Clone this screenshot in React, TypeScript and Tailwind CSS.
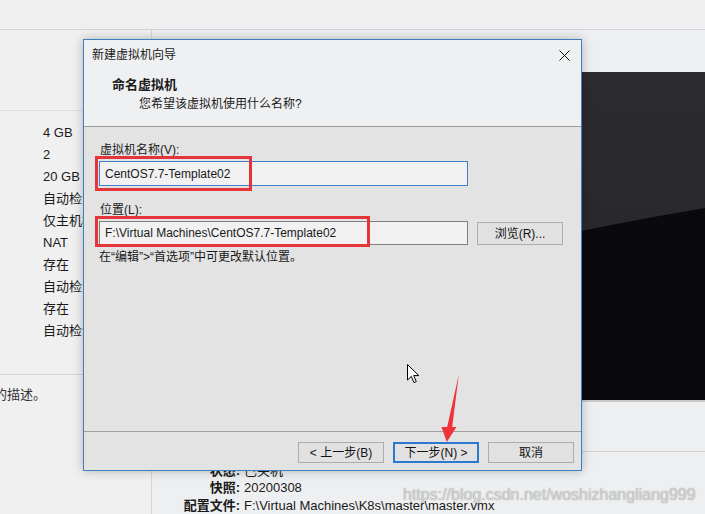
import React from "react";

const FONT = "font-['Liberation_Sans','Noto_Sans_CJK_SC',sans-serif]";

function Btn({ children, primary, className = "" }: { children: React.ReactNode; primary?: boolean; className?: string }) {
  return (
    <div
      className={
        "flex items-center justify-center bg-[#e1e1e1] text-[12px] leading-none text-[#111] " +
        (primary ? "border-2 border-[#2a78d0] " : "border border-[#adadad] ") +
        className
      }
    >
      {children}
    </div>
  );
}

export default function App() {
  const list = ["4 GB", "2", "20 GB", "自动检测", "仅主机模式", "NAT", "存在", "自动检测", "存在", "自动检测"];
  return (
    <div className={"relative w-[705px] h-[514px] overflow-hidden bg-[#f0f0f0] text-[#1a1a1a] " + FONT}>
      {/* top bar */}
      <div className="h-[30px] border-b border-[#cdd6de] bg-[#efeff0]" />
      <div className="flex h-[484px]">
        {/* left column */}
        <div className="w-[152px] shrink-0 border-r border-[#d6d6d6] bg-[#f0f0f0]">
          <div className="h-[81px] border-b border-[#d8dde2]" />
          <div className="pt-[11px] pl-[43px] h-[264px] border-b border-[#d3d3d3]">
            {list.map((t, i) => (
              <div key={i} className="h-[22px] leading-[22px] text-[13px] whitespace-nowrap">
                {t}
              </div>
            ))}
          </div>
          <div className="pt-[10px] ml-[-6px] text-[13px] leading-[20px] whitespace-nowrap text-[#333]">的描述。</div>
        </div>
        {/* right column */}
        <div className="flex-1 flex flex-col bg-[#eeeff0]">
          <div className="mt-[42px] ml-[18px] h-[328px] relative">
            <svg className="block w-full h-full" viewBox="0 0 535 328" preserveAspectRatio="none">
              <defs>
                <linearGradient id="topg" x1="0" y1="0" x2="0" y2="1">
                  <stop offset="0" stopColor="#2c2c2e" />
                  <stop offset="0.5" stopColor="#29292b" />
                  <stop offset="1" stopColor="#333335" />
                </linearGradient>
              </defs>
              <rect x="0" y="0" width="535" height="328" fill="url(#topg)" />
              <path d="M0,262 Q300,175 535,136 L535,328 L0,328 Z" fill="#0a0a0c" />
            </svg>
            <div className="absolute left-0 right-0 bottom-[-2px] h-[2px] bg-[#c9c9c9]" />
          </div>
          <div className="h-[56px] border-b border-[#d2d2d2]" />
          <div className="pt-[10px] text-[13px] leading-[17.5px]">
            {[
              ["状态:", "已关机"],
              ["快照:", "20200308"],
              ["配置文件:", "F:\\Virtual Machines\\K8s\\master\\master.vmx"],
            ].map(([k, v], i) => (
              <div key={i} className="flex whitespace-nowrap">
                <div className="w-[88px] text-right font-bold">{k}</div>
                <div className="ml-[4px]">{v}</div>
              </div>
            ))}
          </div>
        </div>
      </div>

      {/* dialog */}
      <div className="absolute left-[83px] top-[39px] w-[499px] h-[432px] border border-[#3d80c2] bg-[#e3e3e3] flex flex-col shadow-[0_0_10px_rgba(0,0,0,0.25)]">
        <div className="h-[30px] shrink-0 bg-[#eff0f1] flex items-center justify-between pl-[8px] pr-[10px]">
          <span className="text-[12px] leading-4">新建虚拟机向导</span>
          <svg width="11" height="11" viewBox="0 0 11 11" className="mr-[1px]">
            <path d="M0.5,0.5 L10.5,10.5 M10.5,0.5 L0.5,10.5" stroke="#111" strokeWidth="1" />
          </svg>
        </div>
        <div className="h-[57px] shrink-0 bg-[#eff0f1] border-b border-[#9d9d9d] pt-[7px]">
          <div className="pl-[28px] text-[13px] leading-4 font-bold">命名虚拟机</div>
          <div className="pl-[55px] mt-[3px] text-[12px] leading-4">您希望该虚拟机使用什么名称?</div>
        </div>
        <div className="flex-1 pt-[15px] pl-[15px] text-[12px]">
          <div className="pl-[1px] leading-4">虚拟机名称(V):</div>
          <div className="mt-[3px] w-[369px] h-[25px] border border-[#3f7fc6] bg-[#f1f1f1] flex items-center pl-[5px] leading-4">
            CentOS7.7-Template02
          </div>
          <div className="mt-[16px] pl-[1px] leading-4">位置(L):</div>
          <div className="mt-[3px] flex items-start">
            <div className="w-[369px] h-[24px] border border-[#7f7f7f] bg-[#f1f1f1] flex items-center pl-[5px] leading-4">
              F:\Virtual Machines\CentOS7.7-Template02
            </div>
            <Btn className="ml-[9px] mt-[1px] w-[86px] h-[23px]">浏览(R)...</Btn>
          </div>
          <div className="mt-[4px] leading-4">在“编辑”&gt;“首选项”中可更改默认位置。</div>
        </div>
        <div className="h-[39px] shrink-0 border-t border-[#a0a0a0] bg-[#e3e3e3] flex justify-end items-start pt-[10px] pr-[7px] gap-[9px]">
          <Btn className="w-[86px] h-[21px]">&lt; 上一步(B)</Btn>
          <Btn primary className="w-[86px] h-[21px]">下一步(N) &gt;</Btn>
          <Btn className="w-[86px] h-[21px]">取消</Btn>
        </div>
      </div>

      {/* red annotation boxes */}
      <div className="absolute left-[95px] top-[156px] w-[157px] h-[35px] border-[3px] border-[#e5353b]" />
      <div className="absolute left-[95px] top-[216px] w-[275px] h-[31px] border-[3px] border-[#e5353b]" />

      {/* mouse cursor */}
      <svg className="absolute left-[407px] top-[364px]" width="13" height="20" viewBox="0 0 13 20">
        <path d="M0.5,0.5 L0.5,16 L4.3,12.4 L7,18.6 L9.3,17.6 L6.7,11.6 L11.8,11.6 Z" fill="#fff" stroke="#000" strokeWidth="1" strokeLinejoin="round" />
      </svg>

      {/* red arrow */}
      <svg className="absolute left-[438px] top-[372px]" width="24" height="74" viewBox="0 0 24 74">
        <path d="M20.8,2.5 L14.2,55 L18.5,55 L8.8,70 L3.5,55 L9.2,55 Z" fill="#f0323a" />
      </svg>

      {/* watermark */}
      <div className="absolute left-[403px] top-[485px] text-[16px] leading-5 text-white/60 font-['Liberation_Sans',sans-serif] [text-shadow:0_0_1px_rgba(90,90,90,0.8)] whitespace-nowrap">
        https://blog.csdn.net/woshizhangliang999
      </div>
    </div>
  );
}
